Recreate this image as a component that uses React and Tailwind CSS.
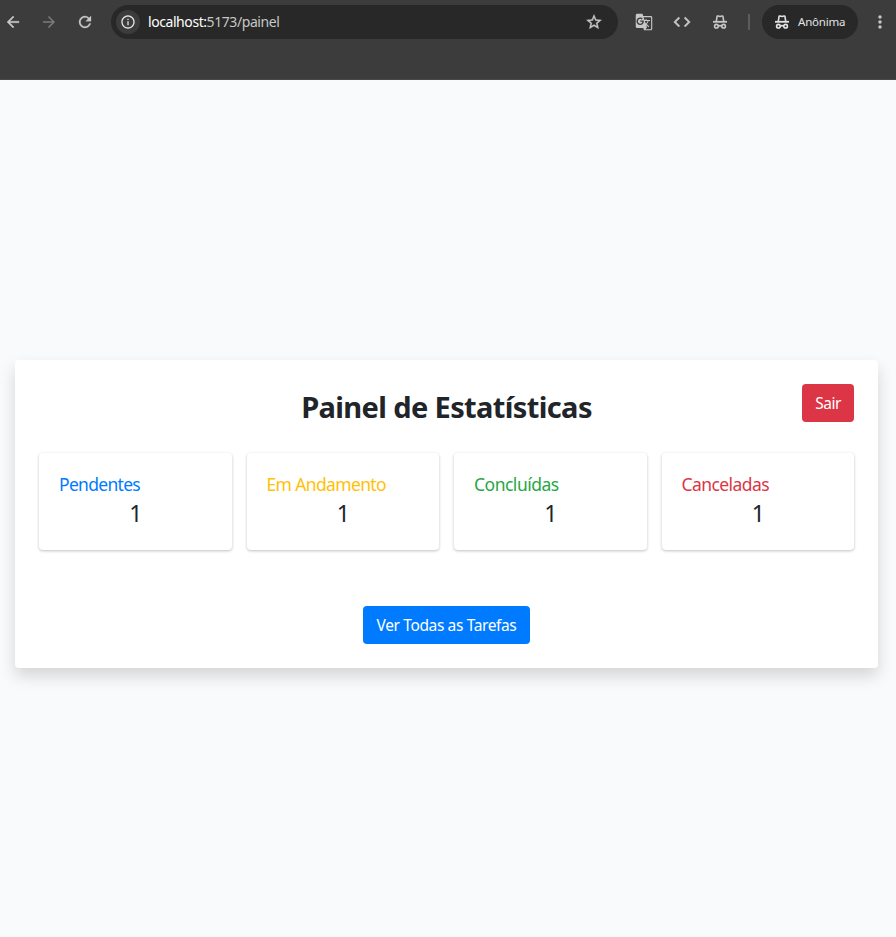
import { MdArrowBack, MdArrowForward, MdRefresh, MdInfoOutline, MdStarBorder, MdGTranslate, MdCode, MdMoreVert } from "react-icons/md";

function Incognito({ className }) {
  return (
    <svg viewBox="0 0 14 14" className={className} fill="none" stroke="currentColor" strokeWidth="1.6">
      <path d="M3.300 6.400 4 1.600Q4.200.8 5 1L7 1.500 9 1Q9.800.8 10 1.600L10.700 6.400" strokeLinejoin="round" />
      <path d="M0 6.800H14" strokeWidth="1.8" />
      <circle cx="3.400" cy="11.200" r="1.800" />
      <circle cx="10.600" cy="11.200" r="1.800" />
      <path d="M5.100 11Q7 10.200 8.900 11" />
    </svg>
  );
}

function Toolbar() {
  return (
    <header className="h-20 bg-[#3c3c3c] border-b border-[#494949] text-[#c7c7c7]">
      <div className="flex h-11 items-center">
        <MdArrowBack className="ml-1 size-[18px] shrink-0 [&>path:not([fill=none])]:stroke-[0.5]" />
        <MdArrowForward className="ml-[18px] size-[18px] shrink-0 text-[#7b7b7b]" />
        <MdRefresh className="ml-[18px] size-[18px] shrink-0 [&>path:not([fill=none])]:stroke-[0.4]" />
        <div className="ml-[17px] flex h-[34px] w-[507px] shrink-0 items-center rounded-full bg-[#282828] pl-[5px] pr-[15px]">
          <span className="flex size-6 items-center justify-center rounded-full bg-[#3c3c3c] text-[#e3e3e3]">
            <MdInfoOutline className="size-4" />
          </span>
          <span className="ml-2 whitespace-nowrap text-[14px] leading-5 tracking-[-0.43px] text-[#c7c7c7]">
            <span className="text-white">localhost:</span>5173/painel
          </span>
          <MdStarBorder className="ml-auto size-[18px] [&>path:not([fill=none])]:stroke-[0.5]" />
        </div>
        <MdGTranslate className="ml-[17px] size-[18px] shrink-0" />
        <MdCode className="ml-[19px] size-5 shrink-0 [&>path:not([fill=none])]:stroke-[0.5]" />
        <Incognito className="ml-[21px] size-[14px] shrink-0" />
        <span className="ml-[21px] h-4 w-[2px] shrink-0 bg-[#5c5c5c]" />
        <div className="ml-[12px] flex h-[34px] w-[96px] shrink-0 items-center rounded-full bg-[#282828] pl-[13px] text-[#e3e3e3]">
          <Incognito className="size-[14px]" />
          <span className="ml-[9px] whitespace-nowrap text-[11.500px] leading-4 tracking-[-0.2px]">Anônima</span>
        </div>
        <MdMoreVert className="ml-[12px] size-5 shrink-0" />
      </div>
    </header>
  );
}

const stats = [
  { label: "Pendentes", value: 1, style: "text-[#007bff] tracking-[-0.7px]" },
  { label: "Em Andamento", value: 1, style: "text-[#ffc107] tracking-[-0.64px]" },
  { label: "Concluídas", value: 1, style: "text-[#28a745] tracking-[-0.5px]" },
  { label: "Canceladas", value: 1, style: "text-[#dc3545] tracking-[-0.57px]" },
];

export default function App() {
  return (
    <div className="flex h-[937px] w-[896px] flex-col overflow-hidden bg-[#f9fafc] font-['Noto_Sans','Open_Sans',sans-serif] text-[#212529]">
      <Toolbar />
      <main className="flex flex-1 items-start justify-center pr-[3px] pt-[280px]">
        <section className="h-[308px] w-[863px] rounded bg-white p-6 shadow-[0_8px_16px_rgba(0,0,0,0.15)]">
          <div className="grid h-[38px] grid-cols-[52px_1fr_52px] items-start">
            <span />
            <h1 className="pt-1 text-center text-[29px] font-bold leading-[38px] tracking-[-0.62px]">Painel de Estatísticas</h1>
            <button className="h-[38px] rounded bg-[#dc3545] pt-[2px] text-[15.500px] tracking-[-0.5px] text-white">Sair</button>
          </div>
          <div className="mt-[31px] grid grid-cols-4 gap-[15px]">
            {stats.map((s) => (
              <article
                key={s.label}
                className="h-[97px] rounded bg-white px-5 pt-[19px] shadow-[0_1px_3px_rgba(0,0,0,0.25)]"
              >
                <h2 className={`whitespace-nowrap text-[17.500px] font-normal leading-6 ${s.style}`}>{s.label}</h2>
                <p className="pl-px text-center text-[23px] font-normal leading-[34px]">{s.value}</p>
              </article>
            ))}
          </div>
          <div className="mt-14 flex justify-center">
            <button className="h-[38px] w-[167px] whitespace-nowrap rounded bg-[#007bff] pt-[2px] text-[15.500px] tracking-[-0.37px] text-white">
              Ver Todas as Tarefas
            </button>
          </div>
        </section>
      </main>
    </div>
  );
}
